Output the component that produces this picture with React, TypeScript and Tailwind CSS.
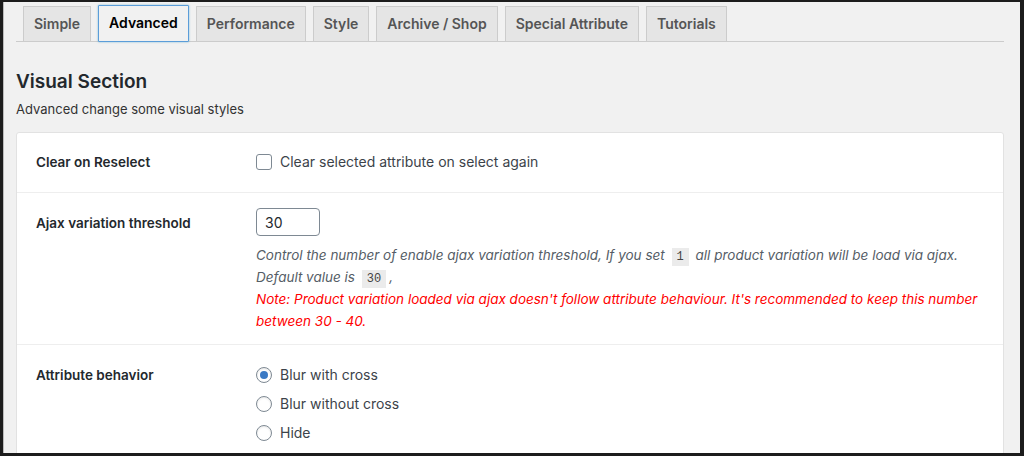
import React from 'react';

const tabs = ['Simple', 'Advanced', 'Performance', 'Style', 'Archive / Shop', 'Special Attribute', 'Tutorials'];

const Code = ({ children }: { children: React.ReactNode }) => (
  <code className="mx-[3px] bg-[#ebebeb] px-[5px] py-[2px] font-['Liberation_Mono',monospace] text-[12px] not-italic leading-none text-[#444]">
    {children}
  </code>
);

const Radio = ({ checked, label }: { checked?: boolean; label: string }) => (
  <label className="flex h-[29px] items-center gap-2">
    <span className="flex h-4 w-4 items-center justify-center rounded-full border border-[#7e8993] bg-white shadow-[inset_0_1px_2px_rgba(0,0,0,0.1)]">
      {checked && <span className="h-2 w-2 rounded-full bg-[#3a79c4]" />}
    </span>
    <span>{label}</span>
  </label>
);

const App = () => {
  return (
    <div className="h-[456px] w-[1024px] bg-[#1c1c1c] pb-[3px] pl-[3px] pr-[4px] pt-[2px] font-['Inter',sans-serif] text-[13px] text-[#23282d]">
      <div className="h-full overflow-hidden border-l border-[#bbb] bg-[#f1f1f1] pl-[12px] pr-[16px]">
        {/* tabs */}
        <div className="flex gap-[7px] border-b border-[#ccc] pl-[7px] pt-[3px]">
          {tabs.map((t) =>
            t === 'Advanced' ? (
              <div
                key={t}
                className="-mb-px rounded-[1px] border border-[#5b9dd9] bg-[#f1f1f1] px-[10px] py-[5px] text-[14px] font-semibold leading-[24px] text-black shadow-[0_0_2px_rgba(30,140,190,0.6)]"
              >
                {t}
              </div>
            ) : (
              <div
                key={t}
                className="mt-[1px] border border-b-0 border-[#ccc] bg-[#e5e5e5] px-[10px] py-[5px] text-[14px] font-semibold leading-[24px] text-[#555]"
              >
                {t}
              </div>
            )
          )}
        </div>

        <h2 className="mt-[27px] text-[19px] font-semibold leading-[26px] text-[#23282d]">Visual Section</h2>
        <p className="mt-[4px] leading-[20px] text-[#333]">Advanced change some visual styles</p>

        {/* panel */}
        <div className="mt-[13px] rounded-[3px] border border-[#e2e2e2] bg-white">
          <div className="grid grid-cols-[220px_1fr] border-b border-[#eee] px-[19px] pb-[20px] pt-[19px]">
            <div className="text-[13.5px] font-semibold leading-[20px]">Clear on Reselect</div>
            <label className="flex items-center gap-2 leading-[20px] text-[#3c434a]">
              <span className="h-4 w-4 rounded-[3px] border border-[#7e8993] bg-white" />
              <span className="text-[14px]">Clear selected attribute on select again</span>
            </label>
          </div>

          <div className="grid grid-cols-[220px_1fr] border-b border-[#eee] px-[19px] pb-[12px] pt-[15px]">
            <div className="pt-[5px] text-[13.5px] font-semibold leading-[20px]">Ajax variation threshold</div>
            <div>
              <div className="flex h-[28px] w-[64px] items-center rounded-[4px] border border-[#7e8993] px-[8px] text-[14px]">
                30
              </div>
              <p className="mt-[8px] whitespace-nowrap text-[13.5px] italic leading-[22px] text-[#555d66]">
                Control the number of enable ajax variation threshold, If you set <Code>1</Code> all product variation will be load via ajax.
                <br />
                Default value is <Code>30</Code>,
              </p>
              <p className="whitespace-nowrap text-[13.5px] italic leading-[22px] text-[#ff0000]">
                Note: Product variation loaded via ajax doesn't follow attribute behaviour. It's recommended to keep this number
                <br />
                between 30 - 40.
              </p>
            </div>
          </div>

          <div className="grid grid-cols-[220px_1fr] px-[19px] pb-[24px] pt-[15px]">
            <div className="pt-[5px] text-[13.5px] font-semibold leading-[20px]">Attribute behavior</div>
            <div className="text-[14px] text-[#3c434a]">
              <Radio checked label="Blur with cross" />
              <Radio label="Blur without cross" />
              <Radio label="Hide" />
            </div>
          </div>
        </div>
      </div>
    </div>
  );
};

export default App;
